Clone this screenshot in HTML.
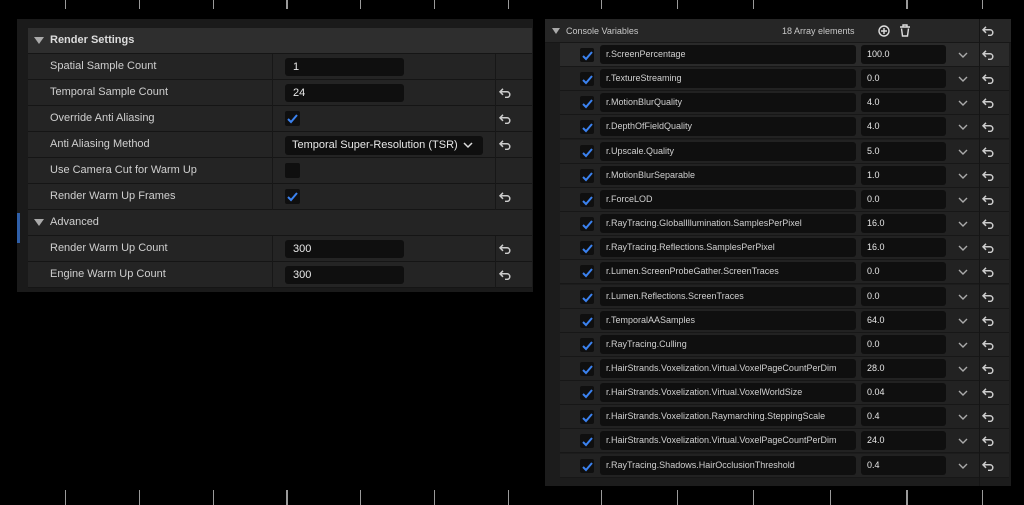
<!DOCTYPE html>
<html><head><meta charset="utf-8"><style>
*{margin:0;padding:0;box-sizing:border-box}
svg{display:block}
body{width:1024px;height:505px;background:#000;position:relative;overflow:hidden;font-family:"Liberation Sans",sans-serif;color:#c8c8c8}
.a{position:absolute}
.tk{position:absolute;width:1px;background:#9a9a9a}
.lp{left:17px;top:19px;width:516px;height:273px;background:#1a1a1a}
.row{position:absolute;left:28px;width:504px;height:26px;background:#242424;border-bottom:1px solid #151515}
.lbl{position:absolute;left:22px;top:6px;font-size:11px;color:#cfcfcf}
.in{position:absolute;background:#0f0f0f;border-radius:3px;color:#e8e8e8;font-size:11px;white-space:nowrap}
.cb{position:absolute;width:15px;height:15px;background:#0f0f0f;border-radius:2px}
.rp{left:545px;top:19px;width:466px;height:467px;background:#1c1c1c}
.rr{position:absolute;left:560px;width:449px;height:24px;background:#222;border-bottom:1px solid #171717}
</style></head><body>
<div class="tk" style="left:65px;top:0;height:9px"></div><div class="tk" style="left:139px;top:0;height:9px"></div><div class="tk" style="left:213px;top:0;height:9px"></div><div class="tk" style="left:286px;top:0;height:9px;width:2px"></div><div class="tk" style="left:360px;top:0;height:9px"></div><div class="tk" style="left:434px;top:0;height:9px"></div><div class="tk" style="left:508px;top:0;height:9px"></div>
<div class="tk" style="left:601px;top:0;height:9px"></div><div class="tk" style="left:677px;top:0;height:9px"></div><div class="tk" style="left:753px;top:0;height:9px"></div><div class="tk" style="left:906px;top:0;height:9px;width:2px"></div><div class="tk" style="left:982px;top:0;height:9px"></div>
<div class="tk" style="left:65px;top:490px;height:15px"></div><div class="tk" style="left:139px;top:490px;height:15px"></div><div class="tk" style="left:213px;top:490px;height:15px"></div><div class="tk" style="left:286px;top:490px;height:15px;width:2px"></div><div class="tk" style="left:360px;top:490px;height:15px"></div><div class="tk" style="left:434px;top:490px;height:15px"></div><div class="tk" style="left:508px;top:490px;height:15px"></div>
<div class="tk" style="left:601px;top:490px;height:15px"></div><div class="tk" style="left:677px;top:490px;height:15px"></div><div class="tk" style="left:753px;top:490px;height:15px"></div><div class="tk" style="left:830px;top:490px;height:15px"></div><div class="tk" style="left:906px;top:490px;height:15px;width:2px"></div><div class="tk" style="left:982px;top:490px;height:15px"></div>

<div class="a lp"></div>
<div class="a" style="left:17px;top:213px;width:3px;height:30px;background:#2f5fa8"></div>
<div class="row" style="top:28px;background:#2e2e2e"><svg class="a" style="left:6px;top:9px" width="10" height="8"><path d="M0 0H10L5 7Z" fill="#aaa"/></svg><div class="lbl" style="top:6px;font-weight:bold;color:#ddd">Render Settings</div></div>
<div class="row" style="top:210px"><svg class="a" style="left:6px;top:9px" width="10" height="8"><path d="M0 0H10L5 7Z" fill="#aaa"/></svg><div class="lbl">Advanced</div></div>
<div id="L"></div>

<div class="a rp"></div>
<div class="a" style="left:545px;top:19px;width:466px;height:24px;background:#262626;border-bottom:1px solid #171717"></div>
<svg class="a" style="left:552px;top:28px" width="8" height="6"><path d="M0 0H8L4 6Z" fill="#aaa"/></svg>
<div class="a" style="left:566px;top:26px;font-size:9px;color:#c8c8c8">Console Variables</div>
<div class="a" style="left:782px;top:26px;font-size:9px;color:#c8c8c8">18 Array elements</div>
<svg class="a" style="left:878px;top:25px" width="12" height="12"><circle cx="6" cy="6" r="5" fill="none" stroke="#ddd" stroke-width="1.4"/><path d="M6 3V9M3 6H9" stroke="#ddd" stroke-width="1.4"/></svg>
<svg class="a" style="left:899px;top:24px" width="12" height="13"><path d="M1 3H11M4 3V1H8V3M2.5 4.5L3.5 12H8.5L9.5 4.5" fill="none" stroke="#ddd" stroke-width="1.4"/></svg>
<div id="R"></div>
<div class="a" style="left:979px;top:19px;width:1px;height:467px;background:#151515"></div>
<script>
const U='<svg width="12" height="10" viewBox="0 0 12 10"><path d="M4 0.8L1 3.8L4 6.8M1 3.8H8A2.8 2.8 0 0 1 8 9.4H6" fill="none" stroke="#ccc" stroke-width="1.5"/></svg>';
const CK='<svg width="15" height="15"><path d="M3 8L6 11L12 4" fill="none" stroke="#3b82f0" stroke-width="2"/></svg>';
const L=[["Spatial Sample Count","i","1",0],["Temporal Sample Count","i","24",1],["Override Anti Aliasing","c",1,1],["Anti Aliasing Method","d","Temporal Super-Resolution (TSR)",1],["Use Camera Cut for Warm Up","c",0,0],["Render Warm Up Frames","c",1,1],null,["Render Warm Up Count","i","300",1],["Engine Warm Up Count","i","300",1]];
let h='';
L.forEach((r,i)=>{if(!r)return;const t=54+i*26;
h+=`<div class="row" style="top:${t}px"><div class="lbl">${r[0]}</div><div class="a" style="left:244px;top:0;width:1px;height:26px;background:#171717"></div><div class="a" style="left:467px;top:0;width:1px;height:26px;background:#171717"></div></div>`;
if(r[1]=="i")h+=`<div class="in" style="left:285px;top:${t+4}px;width:119px;height:18px;padding:3px 8px">${r[2]}</div>`;
if(r[1]=="c")h+=`<div class="cb" style="left:285px;top:${t+5}px">${r[2]?CK:''}</div>`;
if(r[1]=="d")h+=`<div class="in" style="left:285px;top:${t+4}px;width:198px;height:19px;padding:3px 7px;font-size:11px">${r[2]}<svg class="a" style="left:178px;top:6px" width="10" height="7"><path d="M1 1L5 5L9 1" fill="none" stroke="#ddd" stroke-width="1.5"/></svg></div>`;
if(r[3])h+=`<div class="a" style="left:499px;top:${t+8}px">${U}</div>`;});
document.getElementById('L').innerHTML=h;
const R=[["r.ScreenPercentage","100.0"],["r.TextureStreaming","0.0"],["r.MotionBlurQuality","4.0"],["r.DepthOfFieldQuality","4.0"],["r.Upscale.Quality","5.0"],["r.MotionBlurSeparable","1.0"],["r.ForceLOD","0.0"],["r.RayTracing.GlobalIllumination.SamplesPerPixel","16.0"],["r.RayTracing.Reflections.SamplesPerPixel","16.0"],["r.Lumen.ScreenProbeGather.ScreenTraces","0.0"],["r.Lumen.Reflections.ScreenTraces","0.0"],["r.TemporalAASamples","64.0"],["r.RayTracing.Culling","0.0"],["r.HairStrands.Voxelization.Virtual.VoxelPageCountPerDim","28.0"],["r.HairStrands.Voxelization.Virtual.VoxelWorldSize","0.04"],["r.HairStrands.Voxelization.Raymarching.SteppingScale","0.4"],["r.HairStrands.Voxelization.Virtual.VoxelPageCountPerDim","24.0"],["r.RayTracing.Shadows.HairOcclusionThreshold","0.4"]];
h='';
R.forEach((r,i)=>{const t=Math.round(43+i*24.15);
h+=`<div class="rr" style="top:${t}px;${i==0?'background:#2a2a2a':''}"></div>`;
h+=`<div class="cb" style="left:580px;top:${t+5}px;width:14px;height:14px">${CK}</div>`;
h+=`<div class="in" style="left:600px;top:${t+2}px;width:256px;height:19px;padding:4px 6px;font-size:9px;color:#d0d0d0">${r[0]}</div>`;
h+=`<div class="in" style="left:861px;top:${t+2}px;width:85px;height:19px;padding:4px 6px;font-size:9px">${r[1]}</div>`;
h+=`<svg class="a" style="left:958px;top:${t+9}px" width="10" height="7"><path d="M1 1L5 5L9 1" fill="none" stroke="#aaa" stroke-width="1.4"/></svg>`;
h+=`<div class="a" style="left:982px;top:${t+7}px">${U}</div>`;});
h+=`<div class="a" style="left:982px;top:26px">${U}</div>`;
document.getElementById('R').innerHTML=h;
</script>
</body></html>
